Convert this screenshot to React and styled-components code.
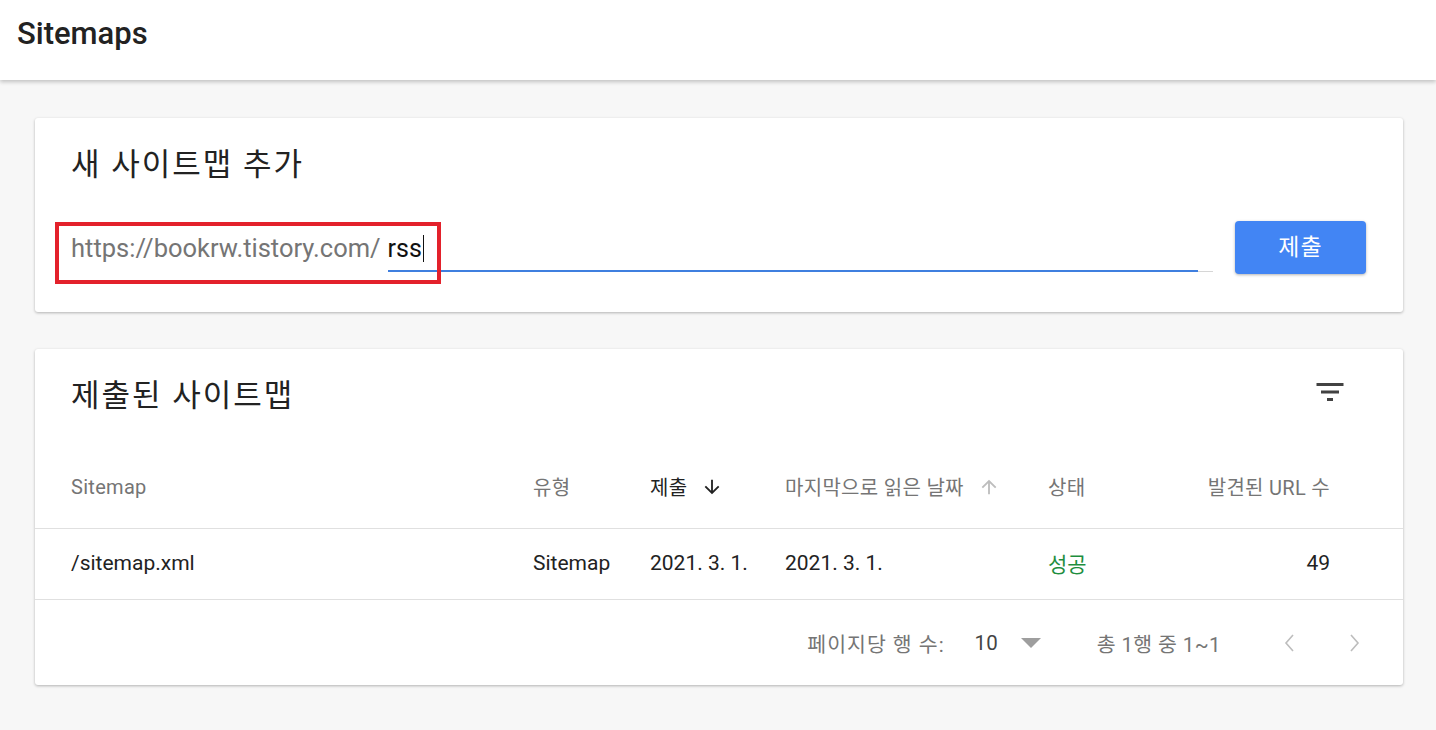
import React from "react";
import styled, { createGlobalStyle } from "styled-components";

const GlobalStyle = createGlobalStyle`
  body {
    margin: 0;
    background: #f7f7f7;
    font-family: Roboto, "Noto Sans CJK KR", sans-serif;
    color: #212121;
  }
`;

const Page = styled.div`
  min-height: 730px;
  background: #f7f7f7;
`;

const TopBar = styled.header`
  height: 80px;
  box-sizing: border-box;
  padding: 14px 17px 0;
  background: #fff;
  box-shadow: 0 2px 4px rgba(0, 0, 0, 0.22);
  position: relative;
  z-index: 1;
`;

const PageTitle = styled.h1`
  margin: 0;
  font-size: 31px;
  line-height: 40px;
  font-weight: 500;
  color: #222;
`;

const Main = styled.main`
  display: flex;
  flex-direction: column;
  gap: 37px;
  padding: 38px 33px 40px 35px;
`;

const Card = styled.section`
  position: relative;
  background: #fff;
  border-radius: 3px;
  box-shadow: 0 1px 3px rgba(0, 0, 0, 0.28);
`;

const CardTitle = styled.h2`
  margin: 0;
  font-size: 31px;
  line-height: 40px;
  letter-spacing: 2px;
  font-weight: 400;
  color: #222;
`;

const AddBody = styled.div`
  padding: 27px 37px 38px 36px;
`;

const InputRow = styled.div`
  display: flex;
  align-items: center;
  margin-top: 36px;
  height: 53px;
`;

const Prefix = styled.span`
  font-size: 25.5px;
  color: #757575;
  margin-right: 7px;
  white-space: nowrap;
`;

const InputBox = styled.div`
  position: relative;
  flex: 1;
  display: flex;
  align-items: center;
  height: 46px;
  margin-top: 2px;
  box-sizing: border-box;
  border-bottom: 1px solid #d6d6d6;
  font-size: 25px;
  color: #111;

  &::after {
    content: "";
    position: absolute;
    left: 0;
    right: 15px;
    bottom: -1px;
    height: 2px;
    background: #3f7fdf;
  }
`;

const Caret = styled.span`
  display: inline-block;
  width: 1.5px;
  height: 27px;
  margin-left: 1px;
  background: #111;
`;

const SubmitButton = styled.button`
  margin-left: 22px;
  width: 131px;
  height: 53px;
  padding: 0 0 5px;
  border: none;
  border-radius: 4px;
  background: #4285f4;
  color: #fff;
  font-family: inherit;
  font-size: 23px;
  letter-spacing: 1px;
  box-shadow: 0 1px 3px rgba(0, 0, 0, 0.3);
  cursor: pointer;
`;

const Highlight = styled.div`
  position: absolute;
  left: 20px;
  top: 104px;
  width: 386px;
  height: 62px;
  box-sizing: border-box;
  border: 4px solid #e3212b;
  pointer-events: none;
`;

const ListHeader = styled.div`
  display: flex;
  justify-content: space-between;
  align-items: flex-start;
  height: 100px;
  box-sizing: border-box;
  padding: 25px 55px 0 36px;

  ${CardTitle} {
    margin-top: 2px;
  }
`;

const IconButton = styled.button`
  display: flex;
  align-items: center;
  justify-content: center;
  width: ${(p) => p.$size || 36}px;
  height: ${(p) => p.$size || 36}px;
  padding: 0;
  border: none;
  background: none;
  cursor: pointer;
  color: ${(p) => p.$color || "#444"};
`;

const cols = "462px 117px 135px 263px 120px 1fr";

const Row = styled.div`
  display: grid;
  grid-template-columns: ${cols};
  align-items: center;
  height: ${(p) => p.$h}px;
  box-sizing: border-box;
  padding: 0 73px ${(p) => (p.$head ? 4 : 2)}px 36px;
  border-bottom: 1px solid #e0e0e0;
  font-size: ${(p) => (p.$head ? 20 : 21)}px;
  letter-spacing: ${(p) => (p.$head ? 0.3 : 0)}px;
  color: ${(p) => (p.$head ? "#757575" : "#222")};
`;

const Cell = styled.div`
  display: flex;
  align-items: center;
  gap: ${(p) => p.$gap || 0}px;
  white-space: nowrap;
  justify-content: ${(p) => (p.$right ? "flex-end" : "flex-start")};
  color: ${(p) => p.$color || "inherit"};
`;

const Footer = styled.div`
  display: flex;
  justify-content: flex-end;
  align-items: center;
  height: 85px;
  padding-right: 24px;
  font-size: 20.5px;
  color: #757575;
`;

const PerPage = styled.div`
  display: flex;
  align-items: center;
  letter-spacing: 1px;
  color: #757575;
`;

const PerPageValue = styled.span`
  margin-left: 30px;
  letter-spacing: 0;
  color: #444;
`;

const DropArrow = styled.svg`
  margin-left: 23px;
`;

const Range = styled.span`
  margin-left: 56px;
  letter-spacing: 0.4px;
`;

const Pager = styled.div`
  display: flex;
  gap: 18px;
  margin-left: 44px;
`;

const ArrowDown = ({ color }) => (
  <svg width="22" height="22" viewBox="0 0 24 24" fill={color}>
    <path d="M20 12l-1.41-1.41L13 16.17V4h-2v12.17l-5.58-5.59L4 12l8 8 8-8z" />
  </svg>
);

const ArrowUp = ({ color }) => (
  <svg width="22" height="22" viewBox="0 0 24 24" fill={color}>
    <path d="M4 12l1.41 1.41L11 7.83V20h2V7.83l5.58 5.59L20 12l-8-8-8 8z" />
  </svg>
);

const FilterIcon = () => (
  <svg width="36" height="36" viewBox="0 0 24 24" fill="currentColor">
    <path d="M10 18h4v-2h-4v2zM3 6v2h18V6H3zm3 7h12v-2H6v2z" />
  </svg>
);

const Chevron = ({ dir }) => (
  <svg width="14" height="20" viewBox="0 0 14 20" fill="none" stroke="currentColor" strokeWidth="1.6">
    {dir === "left" ? <polyline points="11,2 4,10 11,18" /> : <polyline points="3,2 10,10 3,18" />}
  </svg>
);

const sitemaps = [
  { path: "/sitemap.xml", type: "Sitemap", submitted: "2021. 3. 1.", read: "2021. 3. 1.", status: "성공", urls: 49 },
];

const App = () => {
  return (
    <Page>
      <GlobalStyle />
      <TopBar>
        <PageTitle>Sitemaps</PageTitle>
      </TopBar>

      <Main>
        <Card>
          <AddBody>
            <CardTitle>새 사이트맵 추가</CardTitle>
            <InputRow>
              <Prefix>https://bookrw.tistory.com/</Prefix>
              <InputBox>
                rss
                <Caret />
              </InputBox>
              <SubmitButton>제출</SubmitButton>
            </InputRow>
          </AddBody>
          <Highlight />
        </Card>

        <Card>
          <ListHeader>
            <CardTitle>제출된 사이트맵</CardTitle>
            <IconButton $color="#424242">
              <FilterIcon />
            </IconButton>
          </ListHeader>

          <Row $head $h={80}>
            <Cell>Sitemap</Cell>
            <Cell>유형</Cell>
            <Cell $gap={14} $color="#222">
              제출 <ArrowDown color="#222" />
            </Cell>
            <Cell $gap={14}>
              마지막으로 읽은 날짜 <ArrowUp color="#bdbdbd" />
            </Cell>
            <Cell>상태</Cell>
            <Cell $right>발견된 URL 수</Cell>
          </Row>

          {sitemaps.map((s) => (
            <Row key={s.path} $h={71}>
              <Cell>{s.path}</Cell>
              <Cell>{s.type}</Cell>
              <Cell>{s.submitted}</Cell>
              <Cell>{s.read}</Cell>
              <Cell $color="#1e8e3e">{s.status}</Cell>
              <Cell $right>{s.urls}</Cell>
            </Row>
          ))}

          <Footer>
            <PerPage>
              페이지당 행 수:
              <PerPageValue>10</PerPageValue>
              <DropArrow width="20" height="10" viewBox="0 0 20 10">
                <polygon points="0,0 20,0 10,10" fill="#9e9e9e" />
              </DropArrow>
            </PerPage>
            <Range>총 1행 중 1~1</Range>
            <Pager>
              <IconButton $size={48} $color="#bdbdbd">
                <Chevron dir="left" />
              </IconButton>
              <IconButton $size={48} $color="#bdbdbd">
                <Chevron dir="right" />
              </IconButton>
            </Pager>
          </Footer>
        </Card>
      </Main>
    </Page>
  );
};

export default App;
